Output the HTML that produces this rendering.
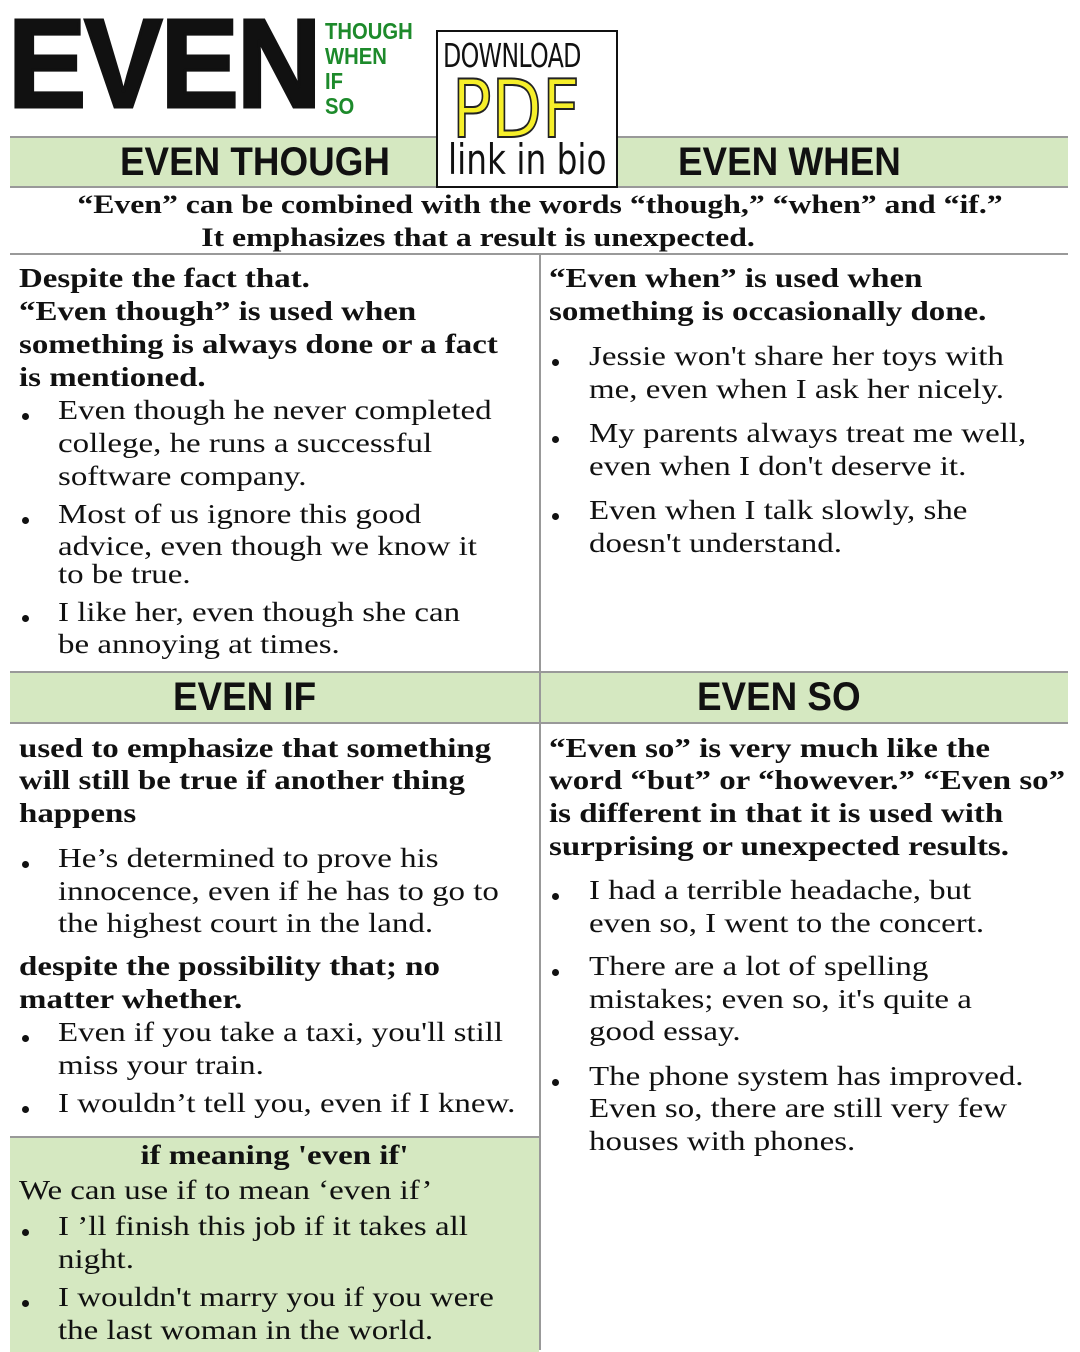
<!DOCTYPE html>
<html><head><meta charset="utf-8"><style>
body{margin:0;width:1080px;height:1350px;background:#fff;position:relative;overflow:hidden;font-family:"Liberation Serif",serif;color:#111}
.a{position:absolute;white-space:nowrap;line-height:34px;font-size:27px;transform:scaleX(1.22);transform-origin:left}
.c{transform-origin:center}
.b{font-weight:bold}
.bar{position:absolute;left:10px;width:1058px;background:#d5e8c1;border-top:2px solid #999;border-bottom:2px solid #999}
.h{position:absolute;font-family:"Liberation Sans",sans-serif;font-weight:bold;font-size:40px;line-height:48px;transform:scaleX(.92);white-space:nowrap}
.dot{position:absolute;width:7px;height:7px;border-radius:50%;background:#111}
</style></head><body>
<div style="position:absolute;left:8px;top:-6px;font-family:'Liberation Sans',sans-serif;font-weight:bold;font-size:126px;line-height:140px;transform:scaleX(.93);transform-origin:left;letter-spacing:-2px;-webkit-text-stroke:3px #111">EVEN</div>
<div style="position:absolute;left:325px;top:19px;font-family:'Liberation Sans',sans-serif;font-weight:bold;font-size:23px;line-height:25px;color:#1d8a2b;transform:scaleX(.88);transform-origin:left">THOUGH<br>WHEN<br>IF<br>SO</div>

<div class="bar" style="top:136px;height:48px"></div>
<div class="h" style="left:120px;top:138px;transform-origin:left">EVEN THOUGH</div>
<div class="h" style="left:678px;top:138px;transform-origin:left">EVEN WHEN</div>

<div style="position:absolute;left:436px;top:30px;width:178px;height:154px;background:#fff;border:2px solid #111"></div>
<div style="position:absolute;left:443px;top:36px;font-family:'DejaVu Sans',sans-serif;font-size:33px;line-height:40px;transform:scaleX(.72);transform-origin:left;letter-spacing:-1px">DOWNLOAD</div>
<div style="position:absolute;left:452px;top:70px;font-family:'DejaVu Sans',sans-serif;font-size:80px;line-height:80px;color:#f6ef2a;-webkit-text-stroke:2px #222;transform:scaleX(.82);transform-origin:left">PDF</div>
<div style="position:absolute;left:448px;top:136px;font-family:'DejaVu Sans',sans-serif;font-size:42px;line-height:48px;transform:scaleX(.78);transform-origin:left">link in bio</div>

<div class="a b c" style="left:0;width:1080px;text-align:center;top:188px;font-size:26px">“Even” can be combined with the words “though,” “when” and “if.”</div>
<div class="a b c" style="left:0;width:956px;text-align:center;top:221px;font-size:26px">It emphasizes that a result is unexpected.</div>
<div style="position:absolute;left:10px;top:253px;width:1058px;height:2px;background:#999"></div>
<div style="position:absolute;left:539px;top:253px;width:2px;height:1097px;background:#999"></div>

<div class="a b" style="left:19px;top:261px">Despite the fact that.</div>
<div class="a b" style="left:19px;top:294px">“Even though” is used when</div>
<div class="a b" style="left:19px;top:327px">something is always done or a fact</div>
<div class="a b" style="left:19px;top:360px">is mentioned.</div>
<div class="dot" style="left:22px;top:413px"></div>
<div class="a" style="left:58px;top:393px">Even though he never completed</div>
<div class="a" style="left:58px;top:426px">college, he runs a successful</div>
<div class="a" style="left:58px;top:459px">software company.</div>
<div class="dot" style="left:22px;top:517px"></div>
<div class="a" style="left:58px;top:497px">Most of us ignore this good</div>
<div class="a" style="left:58px;top:529px">advice, even though we know it</div>
<div class="a" style="left:58px;top:557px">to be true.</div>
<div class="dot" style="left:22px;top:615px"></div>
<div class="a" style="left:58px;top:595px">I like her, even though she can</div>
<div class="a" style="left:58px;top:627px">be annoying at times.</div>

<div class="a b" style="left:549px;top:261px">“Even when” is used when</div>
<div class="a b" style="left:549px;top:294px">something is occasionally done.</div>
<div class="dot" style="left:552px;top:359px"></div>
<div class="a" style="left:589px;top:339px">Jessie won't share her toys with</div>
<div class="a" style="left:589px;top:372px">me, even when I ask her nicely.</div>
<div class="dot" style="left:552px;top:436px"></div>
<div class="a" style="left:589px;top:416px">My parents always treat me well,</div>
<div class="a" style="left:589px;top:449px">even when I don't deserve it.</div>
<div class="dot" style="left:552px;top:513px"></div>
<div class="a" style="left:589px;top:493px">Even when I talk slowly, she</div>
<div class="a" style="left:589px;top:526px">doesn't understand.</div>

<div class="bar" style="top:671px;height:49px"></div>
<div style="position:absolute;left:539px;top:673px;width:2px;height:49px;background:#999"></div>
<div class="h" style="left:173px;top:673px;transform-origin:left">EVEN IF</div>
<div class="h" style="left:697px;top:673px;transform-origin:left">EVEN SO</div>

<div class="a b" style="left:19px;top:731px">used to emphasize that something</div>
<div class="a b" style="left:19px;top:763px">will still be true if another thing</div>
<div class="a b" style="left:19px;top:796px">happens</div>
<div class="dot" style="left:22px;top:861px"></div>
<div class="a" style="left:58px;top:841px">He’s determined to prove his</div>
<div class="a" style="left:58px;top:874px">innocence, even if he has to go to</div>
<div class="a" style="left:58px;top:906px">the highest court in the land.</div>
<div class="a b" style="left:19px;top:949px">despite the possibility that; no</div>
<div class="a b" style="left:19px;top:982px">matter whether.</div>
<div class="dot" style="left:22px;top:1035px"></div>
<div class="a" style="left:58px;top:1015px">Even if you take a taxi, you'll still</div>
<div class="a" style="left:58px;top:1048px">miss your train.</div>
<div class="dot" style="left:22px;top:1106px"></div>
<div class="a" style="left:58px;top:1086px">I wouldn’t tell you, even if I knew.</div>

<div style="position:absolute;left:10px;top:1136px;width:529px;height:214px;background:#d5e8c1;border-top:2px solid #999"></div>
<div class="a b c" style="left:10px;width:529px;text-align:center;top:1138px">if meaning 'even if'</div>
<div class="a" style="left:19px;top:1173px">We can use if to mean ‘even if’</div>
<div class="dot" style="left:22px;top:1229px"></div>
<div class="a" style="left:58px;top:1209px">I ’ll finish this job if it takes all</div>
<div class="a" style="left:58px;top:1242px">night.</div>
<div class="dot" style="left:22px;top:1300px"></div>
<div class="a" style="left:58px;top:1280px">I wouldn't marry you if you were</div>
<div class="a" style="left:58px;top:1313px">the last woman in the world.</div>

<div class="a b" style="left:549px;top:731px">“Even so” is very much like the</div>
<div class="a b" style="left:549px;top:763px">word “but” or “however.” “Even so”</div>
<div class="a b" style="left:549px;top:796px">is different in that it is used with</div>
<div class="a b" style="left:549px;top:829px">surprising or unexpected results.</div>
<div class="dot" style="left:552px;top:893px"></div>
<div class="a" style="left:589px;top:873px">I had a terrible headache, but</div>
<div class="a" style="left:589px;top:906px">even so, I went to the concert.</div>
<div class="dot" style="left:552px;top:969px"></div>
<div class="a" style="left:589px;top:949px">There are a lot of spelling</div>
<div class="a" style="left:589px;top:982px">mistakes; even so, it's quite a</div>
<div class="a" style="left:589px;top:1014px">good essay.</div>
<div class="dot" style="left:552px;top:1079px"></div>
<div class="a" style="left:589px;top:1059px">The phone system has improved.</div>
<div class="a" style="left:589px;top:1091px">Even so, there are still very few</div>
<div class="a" style="left:589px;top:1124px">houses with phones.</div>
</body></html>
